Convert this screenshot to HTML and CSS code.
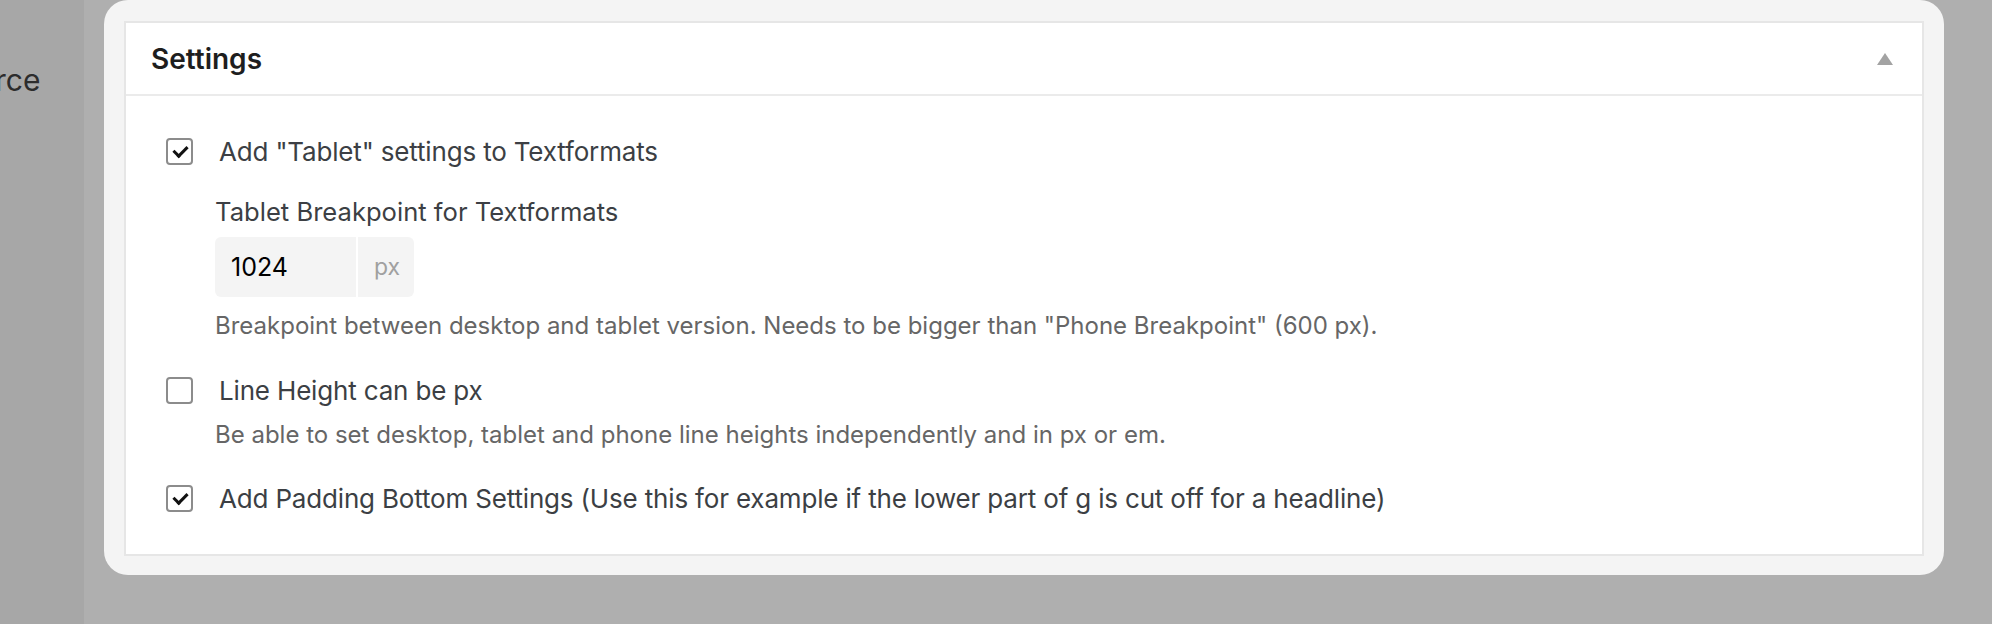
FILE: index.html
```html
<!DOCTYPE html>
<html lang="en">
<head>
    <meta charset="UTF-8">
    <meta name="viewport" content="width=device-width, initial-scale=1.0">
    <title>Settings</title>
    <link rel="stylesheet" href="styles.css">
</head>
<body>
    <div class="page">
        <div class="sidebar">
            <span class="sidebar-item">Source</span>
        </div>
        <div class="main">
            <div class="card">
                <div class="panel">
                    <div class="panel-header">
                        <h2>Settings</h2>
                        <span class="toggle-arrow"></span>
                    </div>
                    <div class="panel-body">
                        <label class="check-row">
                            <span class="checkbox checked"></span>
                            <span class="check-label">Add "Tablet" settings to Textformats</span>
                        </label>

                        <div class="sub-field">
                            <div class="field-label">Tablet Breakpoint for Textformats</div>
                            <div class="input-group">
                                <span class="input-value">1024</span>
                                <span class="input-unit">px</span>
                            </div>
                            <p class="field-help">Breakpoint between desktop and tablet version. Needs to be bigger than "Phone Breakpoint" (600 px).</p>
                        </div>

                        <label class="check-row row-second">
                            <span class="checkbox"></span>
                            <span class="check-label">Line Height can be px</span>
                        </label>
                        <p class="field-help help-second">Be able to set desktop, tablet and phone line heights independently and in px or em.</p>

                        <label class="check-row row-third">
                            <span class="checkbox checked"></span>
                            <span class="check-label">Add Padding Bottom Settings (Use this for example if the lower part of g is cut off for a headline)</span>
                        </label>
                    </div>
                </div>
            </div>
        </div>
    </div>
</body>
</html>
```

FILE: styles.css
```css
body {
    font-family: 'Inter', 'Liberation Sans', sans-serif;
    margin: 0;
    padding: 0;
    background-color: #afafaf;
}

.page {
    display: flex;
    height: 624px;
    overflow: hidden;
}

.sidebar {
    width: 84px;
    flex-shrink: 0;
    background-color: #a7a7a7;
    overflow: hidden;
    padding-top: 62px;
    box-sizing: border-box;
}

.sidebar-item {
    display: block;
    white-space: nowrap;
    font-size: 30px;
    line-height: 36px;
    color: #2c2c2c;
    margin-left: -60px;
}

.main {
    flex: 1;
    padding: 0 48px 0 20px;
}

.card {
    background-color: #f4f4f4;
    border-radius: 24px;
    padding: 21px 20px 19px 20px;
}

.panel {
    background-color: #ffffff;
    border: 2px solid #e6e6e6;
}

.panel-header {
    display: flex;
    justify-content: space-between;
    align-items: center;
    height: 71px;
    padding: 0 29px 0 25px;
    border-bottom: 2px solid #ebebeb;
}

.panel-header h2 {
    margin: 0;
    font-size: 28px;
    font-weight: 600;
    color: #1e1e1e;
}

.toggle-arrow {
    width: 0;
    height: 0;
    border-left: 8px solid transparent;
    border-right: 8px solid transparent;
    border-bottom: 12px solid #a3a3a3;
}

.panel-body {
    padding: 42px 42px 42px 40px;
}

.check-row {
    display: flex;
    align-items: center;
    gap: 26px;
    height: 27px;
}

.checkbox {
    width: 27px;
    height: 27px;
    box-sizing: border-box;
    border: 2px solid #8c8c8c;
    border-radius: 4px;
    background-color: #ffffff;
    flex-shrink: 0;
    position: relative;
}

.checkbox.checked::after {
    content: "";
    position: absolute;
    left: 8px;
    top: 3px;
    width: 6px;
    height: 11px;
    border-right: 3px solid #111;
    border-bottom: 3px solid #111;
    transform: rotate(45deg);
}

.check-label {
    font-size: 26px;
    line-height: 27px;
    letter-spacing: -0.17px;
    color: #3c3f44;
    white-space: nowrap;
}

.sub-field {
    margin-left: 49px;
    padding-top: 32px;
}

.field-label {
    font-size: 25.6px;
    line-height: 30px;
    color: #3c3f44;
}

.input-group {
    display: flex;
    gap: 2px;
    margin-top: 10px;
    height: 60px;
}

.input-value {
    width: 141px;
    box-sizing: border-box;
    padding-left: 16px;
    background-color: #f4f4f4;
    border-radius: 6px 0 0 6px;
    font-size: 25px;
    line-height: 60px;
    color: #000;
}

.input-unit {
    width: 56px;
    box-sizing: border-box;
    padding-left: 2px;
    background-color: #f4f4f4;
    border-radius: 0 6px 6px 0;
    font-size: 23px;
    line-height: 60px;
    color: #a0a0a0;
    text-align: center;
}

.field-help {
    margin: 14px 0 0 0;
    font-size: 24px;
    line-height: 30px;
    color: #666;
}

.row-second {
    margin-top: 36px;
}

.help-second {
    margin: 16px 0 0 49px;
}

.row-third {
    margin-top: 35px;
}
```
